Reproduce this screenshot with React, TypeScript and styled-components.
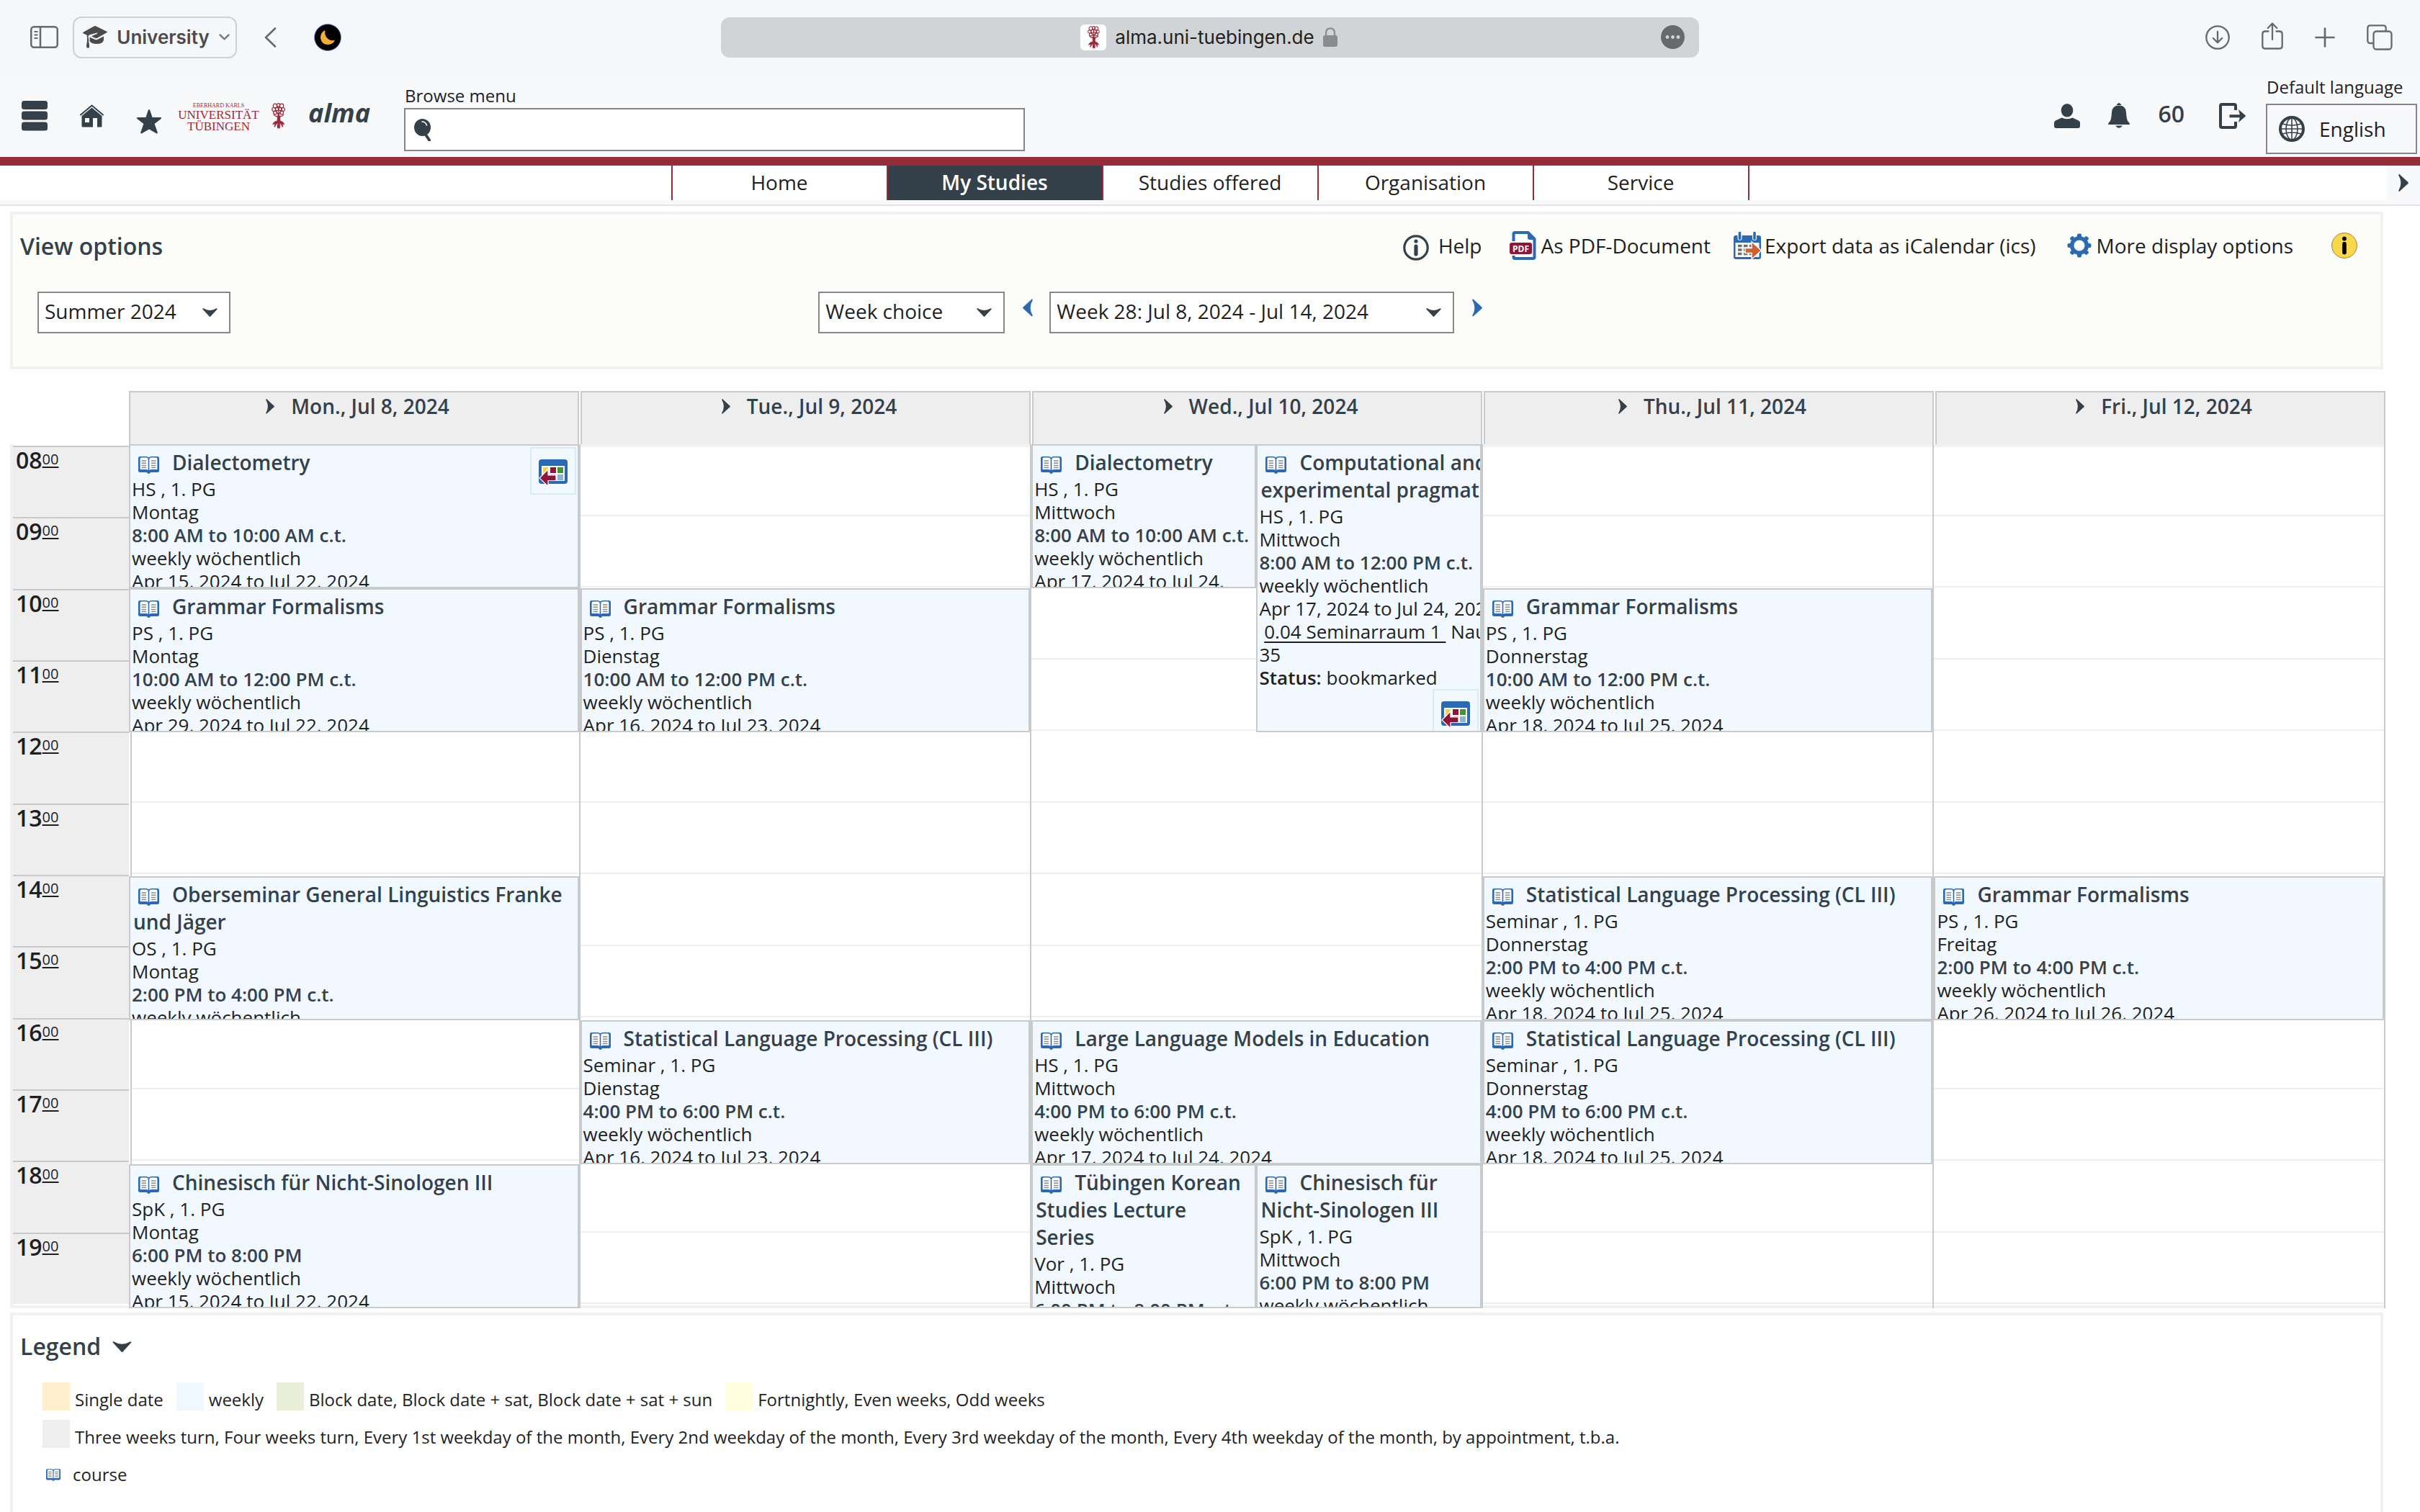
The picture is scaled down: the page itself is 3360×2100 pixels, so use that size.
import React from 'react';
import styled, { createGlobalStyle } from 'styled-components';

const ink = '#1f1f1f';
const slate = '#34414b';
const blue = '#2b6ab3';
const wine = '#972b39';
const line = '#c9cacb';
const pale = '#f1f1f2';
const chrome = '#67696b';

const Global = createGlobalStyle`
  *, *::before, *::after { box-sizing: border-box; }
  body {
    margin: 0;
    background: #fff;
    color: ${ink};
    font-family: "Open Sans", "Noto Sans", sans-serif;
    font-size: 28px;
  }
  button, input, select { font: inherit; color: inherit; margin: 0; }
  svg { display: block; flex: none; }
`;

const Page = styled.div`
  display: flex;
  flex-direction: column;
  min-height: 100vh;
`;

const PlainButton = styled.button`
  display: flex;
  align-items: center;
  justify-content: center;
  padding: 0;
  border: 0;
  background: none;
  cursor: pointer;
`;

/* ---------- browser chrome ---------- */

const BrowserBar = styled.div`
  display: grid;
  grid-template-columns: 1fr 1358px 1fr;
  align-items: center;
  height: 103px;
  background: #f4f8fb;
  font-family: Inter, "Liberation Sans", sans-serif;
`;

const ChromeLeft = styled.div`
  display: flex;
  align-items: center;
  padding-left: 42px;
`;

const ProfileButton = styled(PlainButton)`
  width: 228px;
  height: 58px;
  margin: 0 38px 0 20px;
  padding-left: 4px;
  gap: 13px;
  border: 2px solid #cfd1d3;
  border-radius: 12px;
  color: #4b4b4c;
  font-size: 26px;
  font-weight: 600;
`;

const ExtensionButton = styled(PlainButton)`
  margin-left: 52px;
`;

const AddressBar = styled.div`
  display: flex;
  align-items: center;
  height: 56px;
  padding: 0 20px;
  border-radius: 12px;
  background: #d1d4d6;
  color: #1f2021;
  font-size: 26px;
`;

const Address = styled.div`
  flex: 1;
  display: flex;
  align-items: center;
  justify-content: center;
  gap: 12px;
  padding-left: 30px;
`;

const ChromeRight = styled.div`
  display: flex;
  align-items: center;
  justify-content: flex-end;
  gap: 44px;
  padding-right: 38px;
`;

/* ---------- site header ---------- */

const SiteHeader = styled.header`
  display: flex;
  align-items: center;
  height: 127px;
  padding: 0 4px 0 30px;
  border-bottom: 12px solid ${wine};
  background: #f8f9fb;
  color: ${slate};
`;

const IconRow = styled.div`
  display: flex;
  align-items: center;
  gap: 45px;
`;

const Brand = styled.a`
  display: flex;
  align-items: center;
  margin-left: 24px;
  color: ${wine};
  text-decoration: none;
`;

const Wordmark = styled.span`
  width: 109px;
  margin-right: 19px;
  padding-top: 4px;
  display: flex;
  flex-direction: column;
  align-items: center;
  font-family: "Liberation Serif", serif;
  font-size: 17px;
  line-height: 16px;
`;

const WordmarkSmall = styled.span`
  font-size: 8px;
  line-height: 10px;
`;

const SystemName = styled.span`
  margin-left: 32px;
  padding-bottom: 8px;
  color: ${slate};
  font-size: 36px;
  font-weight: 700;
  font-style: italic;
`;

const SearchBlock = styled.div`
  align-self: flex-end;
  width: 862px;
  margin-left: 47px;
  padding-bottom: 8px;
  color: ${ink};
`;

const SmallLabel = styled.label`
  display: block;
  margin-bottom: 1px;
  padding-left: 1px;
  font-size: 24px;
  line-height: 32px;
  color: ${ink};
`;

const SearchField = styled.div`
  display: flex;
  align-items: center;
  height: 60px;
  padding-left: 12px;
  border: 2px solid #888588;
  background: #fff;
`;

const SearchInput = styled.input`
  flex: 1;
  height: 100%;
  padding: 0 12px;
  border: 0;
  outline: 0;
  background: none;
`;

const UserTools = styled.div`
  display: flex;
  align-items: center;
  gap: 39px;
  margin-left: auto;
  margin-right: 28px;
`;

const Countdown = styled.span`
  padding: 0 9px 6px 0;
  font-size: 32px;
  font-weight: 600;
`;

const LanguageBlock = styled.div`
  align-self: flex-end;
  width: 210px;
  padding-bottom: 4px;
`;

const LanguageButton = styled(PlainButton)`
  justify-content: flex-start;
  width: 100%;
  height: 70px;
  margin-top: 7px;
  padding-left: 16px;
  gap: 20px;
  border: 2px solid #888588;
  color: ${ink};
`;

/* ---------- main navigation ---------- */

const MainNav = styled.nav`
  display: grid;
  grid-template-columns: 1fr auto 1fr;
  height: 56px;
  padding-bottom: 6px;
  border-bottom: 2px solid #e6e4e6;
  background: linear-gradient(#fff 48px, #f8f9fb 48px);
`;

const Tabs = styled.div`
  grid-column: 2;
  display: flex;
  border-right: 2px solid ${wine};
`;

const Tab = styled.a<{ $active?: boolean }>`
  width: 299px;
  border-left: 2px solid ${wine};
  background: ${(p) => (p.$active ? slate : 'transparent')};
  color: ${(p) => (p.$active ? '#fff' : ink)};
  font-weight: ${(p) => (p.$active ? 600 : 400)};
  line-height: 46px;
  text-align: center;
  text-decoration: none;
`;

const NavMore = styled(PlainButton)`
  justify-self: end;
  width: 46px;
  background: #f8f9fb;
`;

/* ---------- view options ---------- */

const Main = styled.main`
  flex: 1;
  display: flex;
  flex-direction: column;
  padding: 8px 48px 0 14px;
`;

const ViewOptions = styled.section`
  margin-right: 3px;
  padding: 20px 32px 46px 10px;
  border: 4px solid ${pale};
  background: #fcfdf8;
`;

const OptionsHead = styled.div`
  display: flex;
  align-items: center;
  height: 46px;
`;

const Heading = styled.h2`
  display: flex;
  align-items: center;
  gap: 16px;
  margin: 0;
  padding-top: 2px;
  color: ${slate};
  font-size: 32px;
  font-weight: 600;
  line-height: 42px;
`;

const Tools = styled.div`
  display: flex;
  align-items: center;
  margin-left: auto;
`;

const Tool = styled.a<{ $lead: number; $gap: number }>`
  display: flex;
  align-items: center;
  gap: ${(p) => p.$gap}px;
  margin-left: ${(p) => p.$lead}px;
  color: ${ink};
  line-height: 46px;
  text-decoration: none;
`;

const Filters = styled.div`
  display: grid;
  grid-template-columns: 1fr 2fr;
  margin-top: 41px;
  padding-left: 24px;
  margin-right: -32px;
`;

const WeekPicker = styled.div`
  display: flex;
  align-items: flex-start;
  gap: 23px;
`;

const StepButton = styled(PlainButton)`
  padding: 10px 0 10px 2px;
`;

const SelectBox = styled.span<{ $width: number }>`
  display: inline-grid;
  align-items: center;
  width: ${(p) => p.$width}px;
  height: 58px;
  border: 2px solid #888;
  background: #fff;

  > * { grid-area: 1 / 1; }
  > svg { justify-self: end; margin-right: 16px; pointer-events: none; }
`;

const NativeSelect = styled.select`
  width: 100%;
  height: 100%;
  padding: 0 0 4px 8px;
  border: 0;
  outline: 0;
  appearance: none;
  background: none;
`;

/* ---------- timetable ---------- */

const DayHeads = styled.div`
  display: grid;
  grid-template-columns: repeat(5, minmax(0, 1fr));
  gap: 2px;
  margin: 30px 0 0 165px;
`;

const DayHead = styled(PlainButton)`
  align-items: flex-start;
  height: 74px;
  padding-left: 10px;
  gap: 23px;
  border: 2px solid ${line};
  border-bottom: 0;
  background: #eee;
  color: ${slate};
  font-weight: 600;
  line-height: 38px;

  svg { margin-top: 9px; }
`;

const Timetable = styled.div`
  display: grid;
  grid-template-columns: 165px minmax(0, 1fr);
`;

const Hours = styled.div`
  display: grid;
  grid-template-rows: repeat(12, 1fr);
  padding-top: 2px;
  padding-bottom: 2px;
  border-left: 4px solid ${pale};
  border-bottom: 4px solid ${pale};
`;

const Hour = styled.div`
  padding-left: 4px;
  border-top: 2px solid ${line};
  background: #eee;
  font-size: 32px;
  font-weight: 600;
  line-height: 36px;
`;

const Minutes = styled.span`
  vertical-align: 6px;
  font-size: 20px;
  font-weight: 400;
  line-height: 20px;
  text-decoration: underline;
  text-decoration-thickness: 2px;
  text-underline-offset: 3px;
`;

const Days = styled.div`
  display: grid;
  grid-template-columns: repeat(5, minmax(0, 1fr));
`;

const Day = styled.div`
  display: grid;
  border-right: 2px solid ${line};

  > * { grid-area: 1 / 1; }
  &:first-child > :first-child { margin-left: 2px; border-left: 2px solid ${line}; }
`;

const Slots = styled.div`
  display: grid;
  grid-template-rows: repeat(12, 1fr);
  padding-bottom: 2px;
  border-bottom: 4px solid ${pale};
`;

const Slot = styled.div`
  border-bottom: 2px solid #eee;

  &:first-child { border-top: 4px solid ${pale}; }
`;

const Events = styled.div`
  display: grid;
  grid-template-columns: repeat(2, minmax(0, 1fr));
  grid-template-rows: repeat(12, 100px);
`;

const EventCard = styled.article<{ $from: number; $to: number; $col: string }>`
  grid-row: ${(p) => p.$from - 7} / ${(p) => p.$to - 7};
  grid-column: ${(p) => p.$col};
  overflow: hidden;
  padding: 4px 0 0 2px;
  border: 2px solid ${line};
  background: #f1f8ff;
  font-size: 26px;
  line-height: 32px;
`;

const EventTitle = styled.h3`
  margin: 0 0 2px;
  padding: 0 8px 0 2px;
  color: ${slate};
  font-size: 28px;
  font-weight: 600;
  line-height: 38px;

  svg { display: inline-block; margin: 0 18px 0 7px; vertical-align: -5px; }
`;

const Line = styled.div<{ $nowrap?: boolean }>`
  white-space: ${(p) => (p.$nowrap ? 'pre' : 'normal')};
`;

const TimeLine = styled(Line)`
  color: ${slate};
  font-weight: 600;
`;

const Strong = styled.b`
  font-weight: 600;
`;

const RoomLink = styled.a`
  color: inherit;
  text-decoration: underline;
  text-decoration-thickness: 2px;
  text-underline-offset: 4px;
`;

const RemoveButton = styled.button<{ $corner?: boolean }>`
  display: block;
  float: right;
  width: 64px;
  height: 66px;
  margin: ${(p) => (p.$corner ? '-2px 2px 0 0' : '0 2px 0 0')};
  padding: 15px 10px 9px;
  border: 2px solid #d9ebf3;
  background: none;
  cursor: pointer;
`;

/* ---------- legend ---------- */

const Legend = styled.section`
  flex: 1;
  margin: 6px 3px 0 0;
  padding: 20px 10px 0;
  border: 4px solid ${pale};
  border-bottom: 0;
`;

const LegendRows = styled.div`
  display: flex;
  flex-direction: column;
  gap: 13px;
  margin-top: 29px;
  padding-left: 31px;
  font-size: 24px;
  line-height: 30px;
`;

const LegendRow = styled.div`
  display: flex;
  gap: 18px;
`;

const LegendItem = styled.span`
  display: flex;
  align-items: flex-end;
  gap: 7px;
`;

const Swatch = styled.span<{ $color: string }>`
  width: 38px;
  height: 39px;
  background: ${(p) => p.$color};
`;

const CourseItem = styled.div`
  display: flex;
  align-items: center;
  gap: 17px;
  padding: 9px 0 0 5px;
`;

/* ---------- icons ---------- */

const ArrowRight = ({ w = 12, h = 21, color = slate }) => (
  <svg width={w} height={h} viewBox="0 0 12 21"><path d="M1 0 Q0 0 .3 1.500 Q5.500 10.500 .3 19.500 Q0 21 1.400 20.600 L11.500 11.300 Q12.300 10.500 11.500 9.700Z" fill={color} /></svg>
);
const ArrowLeft = () => (
  <svg width="14" height="25" viewBox="0 0 12 21"><path d="M11 0 Q12 0 11.700 1.500 Q6.500 10.500 11.700 19.500 Q12 21 10.600 20.600 L.5 11.300 Q-.3 10.500 .5 9.700Z" fill={blue} /></svg>
);
const ArrowDown = ({ w = 21, h = 12 }) => (
  <svg width={w} height={h} viewBox="0 0 21 12"><path d="M0 1 Q0 0 1.500 .3 Q10.500 5.500 19.500 .3 Q21 0 20.600 1.400 L11.300 11.500 Q10.500 12.300 9.700 11.500Z" fill={slate} /></svg>
);

const BookIcon = ({ w = 29, h = 24 }) => (
  <svg width={w} height={h} viewBox="0 0 29 24">
    <path d="M2.500 0H11q2.500 0 3.500 1.500Q15.500 0 18 0h8.500Q29 0 29 2.500v17q0 2.500-2.500 2.500H17q-.5 2-2.500 2t-2.500-2H2.500Q0 22 0 19.500v-17Q0 0 2.500 0Z" fill={blue} />
    <path d="M4 1.500h7q2.700 0 2.700 3V19q-1-1-3-1H2.600V3q0-1.500 1.400-1.500ZM25 1.500h-7q-2.700 0-2.700 3V19q1-1 3-1h8.100V3q0-1.500-1.400-1.500Z" fill="#fff" />
    <path d="M4.500 6h6.500M4.500 9.200h6.500M4.500 12.400h6.500M4.500 15.400h6.500M18 6h6.500M18 9.200h6.500M18 12.400h6.500M18 15.400h6.500" stroke="#8a8a8a" strokeWidth="1.500" />
  </svg>
);

const CalendarRemoveIcon = () => (
  <svg width="40" height="38" viewBox="0 0 40 38">
    <rect width="40" height="34" rx="4" fill={blue} />
    <rect x="4" y="9" width="32" height="21" fill="#fff" />
    <rect x="6" y="11" width="7" height="8" fill="#f7d33c" />
    <rect x="16" y="11" width="8" height="8" fill="#8f1636" />
    <rect x="26" y="11" width="8" height="8" fill="#43932f" />
    <rect x="16" y="21" width="8" height="7" fill="#8ab4dc" />
    <rect x="26" y="21" width="8" height="8" fill="#8ab4dc" />
    <path d="M1 26 13 14v8h11v7.500H13V37.500Z" fill="#8f1636" stroke="#fff" strokeWidth="1.200" />
  </svg>
);

const SidebarIcon = () => (
  <svg width="39" height="31" viewBox="0 0 39 31" fill="none" stroke={chrome} strokeWidth="2.500">
    <rect x="1.250" y="1.250" width="36.500" height="28.500" rx="4" />
    <path d="M14 1v29" /><path d="M5.500 8h5M5.500 12.500h5M5.500 17h5" strokeWidth="1.800" />
  </svg>
);
const CapIcon = () => (
  <svg width="34" height="31" viewBox="0 0 34 31" fill="#4b4b4c">
    <path d="M0 9.500Q0 8.800 1 8.500L15.500.5q1.500-.8 3 0L33.200 7.700q1.300.8 0 1.600L20 16.700q-1.600.8-3.200 0L12 14.300l8-3.500q.8-.8-.3-1.300L9 12.500 7.500 14v3L5.500 15.500 6 13 1 10.500Q0 10 0 9.500Z" />
    <path d="M9.500 15.500 17 19q1.500.6 3 0l9-4.500v5Q28 25 19 25q-7 0-9.500-4ZM6 16.500h2l.3 6q1.200 5 .5 7.500-1.800 1.600-3.500 0-.7-3 .5-7.500Z" />
  </svg>
);
const ChevronSmall = () => (
  <svg width="15" height="9" viewBox="0 0 15 9" fill="none" stroke="#7c7d7f" strokeWidth="2.500" strokeLinecap="round" strokeLinejoin="round"><path d="M1.500 1.500 7.500 7.300l6-5.800" /></svg>
);
const BackIcon = () => (
  <svg width="17" height="28" viewBox="0 0 17 28" fill="none" stroke={chrome} strokeWidth="2.600" strokeLinecap="round" strokeLinejoin="round"><path d="M15 1.500 2 14l13 12.500" /></svg>
);
const MoonIcon = () => (
  <svg width="38" height="38" viewBox="0 0 38 38">
    <circle cx="19" cy="19" r="18.500" fill="#000" stroke="#8a8ad8" strokeWidth="1" />
    <path d="M15.500 9Q8.500 12 9 20q1.500 9 10.500 9 7 0 9.500-6.500-5.500 2-9.500-1.500Q14 16.500 15.500 9Z" fill="#f6ab35" />
  </svg>
);
const CanopyTree = ({ w = 19, h = 36 }) => (
  <svg width={w} height={h} viewBox="0 0 19 36" fill="none" stroke={wine} strokeWidth="1.200">
    <path d="M8 18q1 5 0 8h4q-1-3 0-8Z" fill={wine} />
    <circle cx="5" cy="4" r="2.800" /><circle cx="9.500" cy="3" r="2.300" /><circle cx="14" cy="4" r="2.800" />
    <circle cx="3.200" cy="9" r="2.500" /><circle cx="7.500" cy="8.500" r="2.200" /><circle cx="12" cy="8.500" r="2.200" /><circle cx="16" cy="9" r="2.500" />
    <circle cx="5" cy="13.500" r="2.300" /><circle cx="14.200" cy="13.500" r="2.300" />
    <path d="M9.700 19V6M9.700 18Q8 12 5 10M9.700 18Q11 12 15 10M9.700 19Q5 19 3 16M9.700 19Q15 19 17 16" />
    <path d="M9 25Q3 25 1.500 30q2-1.500 3.500 0-2 2-.5 3.500Q6 29 9 28q-2 4-.5 7h3q1-4-.5-7 3 1 4 5.500 2-1.500 0-3.500 2-1.500 3 0Q16 25 11 25Z" fill={wine} strokeWidth=".6" />
  </svg>
);
const LockIcon = () => (
  <svg width="20" height="27" viewBox="0 0 20 27"><rect y="11" width="20" height="16" rx="3" fill="#8a8b8d" /><path d="M4 12V8q0-6.700 6-6.700T16 8v4" fill="none" stroke="#8a8b8d" strokeWidth="2.200" /></svg>
);
const EllipsisIcon = () => (
  <svg width="33" height="33" viewBox="0 0 33 33"><circle cx="16.500" cy="16.500" r="16.500" fill="#67696b" /><g fill="#d1d4d6"><circle cx="9" cy="16.500" r="2.400" /><circle cx="16.500" cy="16.500" r="2.400" /><circle cx="24" cy="16.500" r="2.400" /></g></svg>
);
const chromeStroke = { fill: 'none', stroke: chrome, strokeWidth: 2.3, strokeLinecap: 'round', strokeLinejoin: 'round' } as const;
const DownloadIcon = () => (
  <svg width="34" height="34" viewBox="0 0 34 34" {...chromeStroke}><circle cx="17" cy="17" r="15.700" /><path d="M17 9v15M10.800 18l6.200 6.200L23.200 18" /></svg>
);
const ShareIcon = () => (
  <svg width="30" height="42" viewBox="0 0 30 42" {...chromeStroke}><path d="M9.500 12.500H5q-3.700 0-3.700 3.500v17q0 3.500 3.700 3.500h20q3.700 0 3.700-3.500V16q0-3.500-3.700-3.500h-4.500M15 24V2M8.800 8 15 1.500 21.200 8" /></svg>
);
const PlusIcon = () => (
  <svg width="28" height="28" viewBox="0 0 28 28" {...chromeStroke} strokeWidth="2.700"><path d="M14 1.500v25M1.500 14h25" /></svg>
);
const WindowsIcon = () => (
  <svg width="36" height="36" viewBox="0 0 36 36" {...chromeStroke}><rect x="9.500" y="9.500" width="25" height="25" rx="4" /><path d="M9 26H5q-3.700 0-3.700-3.700V5Q1.300 1.300 5 1.300h18q3.700 0 3.700 3.700v4" /></svg>
);
const MenuIcon = () => (
  <svg width="36" height="42" viewBox="0 0 36 42" fill={slate}><rect width="36" height="12" rx="3.500" /><rect y="14.500" width="36" height="12" rx="3.500" /><rect y="29.500" width="36" height="12" rx="3.500" /></svg>
);
const HouseIcon = () => (
  <svg width="33" height="32" viewBox="0 0 33 32"><path d="M1 14.500 16.500 1.500 32 14.500" fill="none" stroke={slate} strokeWidth="2" strokeLinecap="round" /><path fillRule="evenodd" fill={slate} d="M2.500 16 16.500 4.500 30.500 16V30q0 1.500-1.500 1.500h-5V19h-6v12.500H4q-1.500 0-1.500-1.500ZM7 19v6h6v-6Z" /></svg>
);
const StarIcon = () => (
  <svg width="36" height="50" viewBox="0 0 36 50"><path d="M18 16q.9 0 1.300 1.200l3.200 9.800H34q2 .5.600 2l-9 7 4.200 12q.1 2-1.800 1.300L18 43.500 8 49.300q-1.900.7-1.800-1.300l4.200-12-9-7Q0 27.500 2 27h11.500l3.200-9.800Q17.100 16 18 16Z" fill={slate} /></svg>
);
const SearchIcon = () => (
  <svg width="24" height="31" viewBox="0 0 24 31"><ellipse cx="11.500" cy="12" rx="11.500" ry="12" fill={slate} /><path d="m16 22 5 7.500" stroke={slate} strokeWidth="4" strokeLinecap="round" /><path d="M11 4q5 0 6.500 5" fill="none" stroke="#fff" strokeWidth="1.600" strokeLinecap="round" /></svg>
);
const UserIcon = () => (
  <svg width="36" height="34" viewBox="0 0 36 34" fill={slate}><ellipse cx="18" cy="9.300" rx="8.300" ry="9.300" /><path d="M10.500 19.500Q18 23 25.500 19.500L34 23.500q2 1 2 3V31q0 3-3 3H3q-3 0-3-3v-4.500q0-2 2-3Z" /></svg>
);
const BellIcon = () => (
  <svg width="30" height="35" viewBox="0 0 30 35" fill={slate}><path d="M11.500 3Q15-3 18.500 3ZM15 3.500Q24.500 3.500 25 13q.5 10 2.500 12.500Q30 27 30 30H0q0-3 2.500-4.500Q4.500 23 5 13 5.500 3.500 15 3.500ZM10 31.500h10Q15 38 10 31.500Z" /></svg>
);
const LogoutIcon = () => (
  <svg width="37" height="36" viewBox="0 0 37 36"><path d="M23 10V4q0-2-2-2H4Q2 2 2 4v28q0 2 2 2h17q2 0 2-2v-6" fill="none" stroke={slate} strokeWidth="4" /><path d="M14.500 16.200h14.300L27 9l9.500 8.200q.8.800 0 1.600L27 27l1.800-6.800H14.500Z" fill={slate} /></svg>
);
const GlobeIcon = () => (
  <svg width="36" height="36" viewBox="0 0 36 36" fill="none" stroke={slate} strokeWidth="1.600"><circle cx="18" cy="18" r="16" strokeWidth="4" /><ellipse cx="18" cy="18" rx="8" ry="15" /><path d="M18 3v30M3 18h30M5 11q13 4 26 0M5 25q13-4 26 0" /></svg>
);
const HelpIcon = () => (
  <svg width="36" height="42" viewBox="0 -6 36 42"><circle cx="18" cy="18" r="16.200" fill="none" stroke={slate} strokeWidth="3.200" /><circle cx="18" cy="9" r="2.600" fill={slate} /><rect x="15.400" y="13.500" width="5.200" height="16" rx="2.600" fill={slate} /></svg>
);
const PdfIcon = () => (
  <svg width="37" height="40" viewBox="0 0 37 40">
    <path d="M5.500 14V4q0-2 2-2h18L34.500 11v25q0 2-2 2h-25q-2 0-2-2v-2" fill="#fff" stroke={blue} strokeWidth="4" />
    <path d="M25 1h2l9 9v2h-8q-3 0-3-3Z" fill={blue} />
    <rect x="0" y="16" width="31" height="16" rx="3" fill="#8f1636" />
    <text x="15.500" y="28.500" textAnchor="middle" fontFamily="Open Sans, sans-serif" fontSize="12" fontWeight="700" fill="#fff">PDF</text>
  </svg>
);
const ExportIcon = () => (
  <svg width="39" height="38" viewBox="0 0 39 38">
    <rect y="5" width="38" height="33" rx="3" fill={blue} /><rect x="2.500" y="15" width="33" height="20" fill="#fff" />
    <path d="M8.500 1v8M29 1v8" stroke="#fff" strokeWidth="6" strokeLinecap="round" /><path d="M8.500 1.500v8M29 1.500v8" stroke={blue} strokeWidth="3.600" strokeLinecap="round" />
    <path d="M6 19.500h22M6 25h22M6 30.500h22" stroke="#6e6e6e" strokeWidth="3.600" strokeDasharray="5.500 2.500" />
    <path d="M16 22.500h9V13.500L38.500 26 25 38V29.500h-9Z" fill="#d0602f" stroke="#fff" strokeWidth="1.300" />
  </svg>
);
const GearIcon = () => (
  <svg width="34" height="34" viewBox="-17 -17 34 34">
    {[0, 45, 90, 135, 180, 225, 270, 315].map((a) => (
      <rect key={a} x="-3" y="-16.500" width="6" height="9" rx="2" fill={blue} transform={`rotate(${a})`} />
    ))}
    <circle r="10.300" fill="#fcfdf8" stroke={blue} strokeWidth="5.500" />
  </svg>
);
const InfoIcon = () => (
  <svg width="36" height="36" viewBox="0 0 36 36"><circle cx="18" cy="18" r="17.400" fill="#f9d94a" stroke="#a8784f" strokeWidth="1" /><circle cx="18" cy="8.500" r="2.900" /><rect x="15.200" y="13" width="5.600" height="17.500" rx="2.400" /></svg>
);

/* ---------- data ---------- */

type Course = {
  day: number; from: number; to: number; col?: string;
  title: string[]; kind: string; weekday: string; time: string; range: string;
  corner?: boolean; room?: boolean;
};

const courses: Course[] = [
  { day: 0, from: 8, to: 10, title: ['Dialectometry'], kind: 'HS , 1. PG', weekday: 'Montag', time: '8:00 AM to 10:00 AM c.t.', range: 'Apr 15, 2024 to Jul 22, 2024', corner: true },
  { day: 0, from: 10, to: 12, title: ['Grammar Formalisms'], kind: 'PS , 1. PG', weekday: 'Montag', time: '10:00 AM to 12:00 PM c.t.', range: 'Apr 29, 2024 to Jul 22, 2024' },
  { day: 0, from: 14, to: 16, title: ['Oberseminar General Linguistics Franke und Jäger'], kind: 'OS , 1. PG', weekday: 'Montag', time: '2:00 PM to 4:00 PM c.t.', range: 'Apr 15, 2024 to Jul 22, 2024' },
  { day: 0, from: 18, to: 20, title: ['Chinesisch für Nicht-Sinologen III'], kind: 'SpK , 1. PG', weekday: 'Montag', time: '6:00 PM to 8:00 PM', range: 'Apr 15, 2024 to Jul 22, 2024' },
  { day: 1, from: 10, to: 12, title: ['Grammar Formalisms'], kind: 'PS , 1. PG', weekday: 'Dienstag', time: '10:00 AM to 12:00 PM c.t.', range: 'Apr 16, 2024 to Jul 23, 2024' },
  { day: 1, from: 16, to: 18, title: ['Statistical Language Processing (CL III)'], kind: 'Seminar , 1. PG', weekday: 'Dienstag', time: '4:00 PM to 6:00 PM c.t.', range: 'Apr 16, 2024 to Jul 23, 2024' },
  { day: 2, from: 8, to: 10, col: '1', title: ['Dialectometry'], kind: 'HS , 1. PG', weekday: 'Mittwoch', time: '8:00 AM to 10:00 AM c.t.', range: 'Apr 17, 2024 to Jul 24, 2024' },
  { day: 2, from: 8, to: 12, col: '2', title: ['Computational and', 'experimental pragmatics'], kind: 'HS , 1. PG', weekday: 'Mittwoch', time: '8:00 AM to 12:00 PM c.t.', range: 'Apr 17, 2024 to Jul 24, 2024', room: true },
  { day: 2, from: 16, to: 18, title: ['Large Language Models in Education'], kind: 'HS , 1. PG', weekday: 'Mittwoch', time: '4:00 PM to 6:00 PM c.t.', range: 'Apr 17, 2024 to Jul 24, 2024' },
  { day: 2, from: 18, to: 20, col: '1', title: ['Tübingen Korean Studies Lecture Series'], kind: 'Vor , 1. PG', weekday: 'Mittwoch', time: '6:00 PM to 8:00 PM c.t.', range: 'Apr 17, 2024 to Jul 24, 2024' },
  { day: 2, from: 18, to: 20, col: '2', title: ['Chinesisch für Nicht-Sinologen III'], kind: 'SpK , 1. PG', weekday: 'Mittwoch', time: '6:00 PM to 8:00 PM', range: 'Apr 17, 2024 to Jul 24, 2024' },
  { day: 3, from: 10, to: 12, title: ['Grammar Formalisms'], kind: 'PS , 1. PG', weekday: 'Donnerstag', time: '10:00 AM to 12:00 PM c.t.', range: 'Apr 18, 2024 to Jul 25, 2024' },
  { day: 3, from: 14, to: 16, title: ['Statistical Language Processing (CL III)'], kind: 'Seminar , 1. PG', weekday: 'Donnerstag', time: '2:00 PM to 4:00 PM c.t.', range: 'Apr 18, 2024 to Jul 25, 2024' },
  { day: 3, from: 16, to: 18, title: ['Statistical Language Processing (CL III)'], kind: 'Seminar , 1. PG', weekday: 'Donnerstag', time: '4:00 PM to 6:00 PM c.t.', range: 'Apr 18, 2024 to Jul 25, 2024' },
  { day: 4, from: 14, to: 16, title: ['Grammar Formalisms'], kind: 'PS , 1. PG', weekday: 'Freitag', time: '2:00 PM to 4:00 PM c.t.', range: 'Apr 26, 2024 to Jul 26, 2024' },
];

const days = ['Mon., Jul 8, 2024', 'Tue., Jul 9, 2024', 'Wed., Jul 10, 2024', 'Thu., Jul 11, 2024', 'Fri., Jul 12, 2024'];
const hours = ['08', '09', '10', '11', '12', '13', '14', '15', '16', '17', '18', '19'];

const CourseEvent = ({ c }: { c: Course }) => (
  <EventCard $from={c.from} $to={c.to} $col={c.col ?? '1 / -1'}>
    {c.corner && <RemoveButton $corner aria-label="Remove from timetable"><CalendarRemoveIcon /></RemoveButton>}
    <EventTitle>
      {c.title.map((part, i) => (
        <Line key={part} $nowrap={c.title.length > 1}>{i === 0 && <BookIcon />}{part}</Line>
      ))}
    </EventTitle>
    <Line>{c.kind}</Line>
    <Line>{c.weekday}</Line>
    <TimeLine>{c.time}</TimeLine>
    <Line>weekly wöchentlich</Line>
    <Line $nowrap={c.room}>{c.range}</Line>
    {c.room && (
      <>
        <Line $nowrap> <RoomLink href="#room">0.04 Seminarraum 1 </RoomLink> Nauklerstr.</Line>
        <Line>35</Line>
        <Line><Strong>Status:</Strong> bookmarked</Line>
        <RemoveButton aria-label="Remove from timetable"><CalendarRemoveIcon /></RemoveButton>
      </>
    )}
  </EventCard>
);

const Select = ({ label, value, width }: { label: string; value: string; width: number }) => (
  <SelectBox $width={width}>
    <NativeSelect aria-label={label} defaultValue={value}><option>{value}</option></NativeSelect>
    <ArrowDown />
  </SelectBox>
);

export default function App() {
  return (
    <Page>
      <Global />
      <BrowserBar>
        <ChromeLeft>
          <PlainButton aria-label="Sidebar"><SidebarIcon /></PlainButton>
          <ProfileButton><CapIcon />University<ChevronSmall /></ProfileButton>
          <PlainButton aria-label="Back"><BackIcon /></PlainButton>
          <ExtensionButton aria-label="Dark mode"><MoonIcon /></ExtensionButton>
        </ChromeLeft>
        <AddressBar>
          <Address>
            <svg width="36" height="36" viewBox="0 0 36 36"><rect width="36" height="36" rx="6" fill="#fff" /><g transform="translate(10 2) scale(.88)"><CanopyTree /></g></svg>
            alma.uni-tuebingen.de
            <LockIcon />
          </Address>
          <PlainButton aria-label="Page menu"><EllipsisIcon /></PlainButton>
        </AddressBar>
        <ChromeRight>
          <PlainButton aria-label="Downloads"><DownloadIcon /></PlainButton>
          <PlainButton aria-label="Share"><ShareIcon /></PlainButton>
          <PlainButton aria-label="New tab"><PlusIcon /></PlainButton>
          <PlainButton aria-label="Tab overview"><WindowsIcon /></PlainButton>
        </ChromeRight>
      </BrowserBar>

      <SiteHeader>
        <IconRow>
          <PlainButton aria-label="Menu"><MenuIcon /></PlainButton>
          <PlainButton aria-label="Start page"><HouseIcon /></PlainButton>
          <PlainButton aria-label="Favourites"><StarIcon /></PlainButton>
        </IconRow>
        <Brand href="#home">
          <Wordmark><WordmarkSmall>EBERHARD KARLS</WordmarkSmall><span>UNIVERSITÄT</span><span>TÜBINGEN</span></Wordmark>
          <CanopyTree />
          <SystemName>alma</SystemName>
        </Brand>
        <SearchBlock>
          <SmallLabel htmlFor="browse">Browse menu</SmallLabel>
          <SearchField><SearchIcon /><SearchInput id="browse" /></SearchField>
        </SearchBlock>
        <UserTools>
          <PlainButton aria-label="Account"><UserIcon /></PlainButton>
          <PlainButton aria-label="Notifications"><BellIcon /></PlainButton>
          <Countdown>60</Countdown>
          <PlainButton aria-label="Log out"><LogoutIcon /></PlainButton>
        </UserTools>
        <LanguageBlock>
          <SmallLabel htmlFor="language">Default language</SmallLabel>
          <LanguageButton id="language"><GlobeIcon />English</LanguageButton>
        </LanguageBlock>
      </SiteHeader>

      <MainNav>
        <Tabs>
          <Tab href="#home">Home</Tab>
          <Tab href="#studies" $active>My Studies</Tab>
          <Tab href="#offered">Studies offered</Tab>
          <Tab href="#organisation">Organisation</Tab>
          <Tab href="#service">Service</Tab>
        </Tabs>
        <NavMore aria-label="More"><ArrowRight w={14} h={26} /></NavMore>
      </MainNav>

      <Main>
        <ViewOptions>
          <OptionsHead>
            <Heading>View options</Heading>
            <Tools>
              <Tool href="#help" $lead={0} $gap={13}><HelpIcon />Help</Tool>
              <Tool href="#pdf" $lead={38} $gap={7}><PdfIcon />As PDF-Document</Tool>
              <Tool href="#ics" $lead={32} $gap={4}><ExportIcon />Export data as iCalendar (ics)</Tool>
              <Tool href="#more" $lead={43} $gap={7}><GearIcon />More display options</Tool>
              <Tool href="#info" $lead={53} $gap={0} aria-label="Information"><InfoIcon /></Tool>
            </Tools>
          </OptionsHead>
          <Filters>
            <Select label="Term" value="Summer 2024" width={268} />
            <WeekPicker>
              <Select label="Display" value="Week choice" width={259} />
              <StepButton aria-label="Previous week"><ArrowLeft /></StepButton>
              <Select label="Week" value="Week 28: Jul 8, 2024 - Jul 14, 2024" width={562} />
              <StepButton aria-label="Next week"><ArrowRight w={14} h={25} color={blue} /></StepButton>
            </WeekPicker>
          </Filters>
        </ViewOptions>

        <DayHeads>
          {days.map((d) => <DayHead key={d}><ArrowRight />{d}</DayHead>)}
        </DayHeads>
        <Timetable>
          <Hours>
            {hours.map((h) => <Hour key={h}>{h}<Minutes>00</Minutes></Hour>)}
          </Hours>
          <Days>
            {days.map((d, i) => (
              <Day key={d}>
                <Slots>{hours.map((h) => <Slot key={h} />)}</Slots>
                <Events>
                  {courses.filter((c) => c.day === i).map((c) => <CourseEvent key={c.from + (c.col ?? '')} c={c} />)}
                </Events>
              </Day>
            ))}
          </Days>
        </Timetable>

        <Legend>
          <Heading>Legend <ArrowDown w={27} h={15} /></Heading>
          <LegendRows>
            <LegendRow>
              <LegendItem><Swatch $color="#ffefcd" />Single date</LegendItem>
              <LegendItem><Swatch $color="#f0f8ff" />weekly</LegendItem>
              <LegendItem><Swatch $color="#e8efd6" />Block date, Block date + sat, Block date + sat + sun</LegendItem>
              <LegendItem><Swatch $color="#ffffe0" />Fortnightly, Even weeks, Odd weeks</LegendItem>
            </LegendRow>
            <LegendRow>
              <LegendItem><Swatch $color="#eeeeee" />Three weeks turn, Four weeks turn, Every 1st weekday of the month, Every 2nd weekday of the month, Every 3rd weekday of the month, Every 4th weekday of the month, by appointment, t.b.a.</LegendItem>
            </LegendRow>
            <CourseItem><BookIcon w={20} h={17} />course</CourseItem>
          </LegendRows>
        </Legend>
      </Main>
    </Page>
  );
}
